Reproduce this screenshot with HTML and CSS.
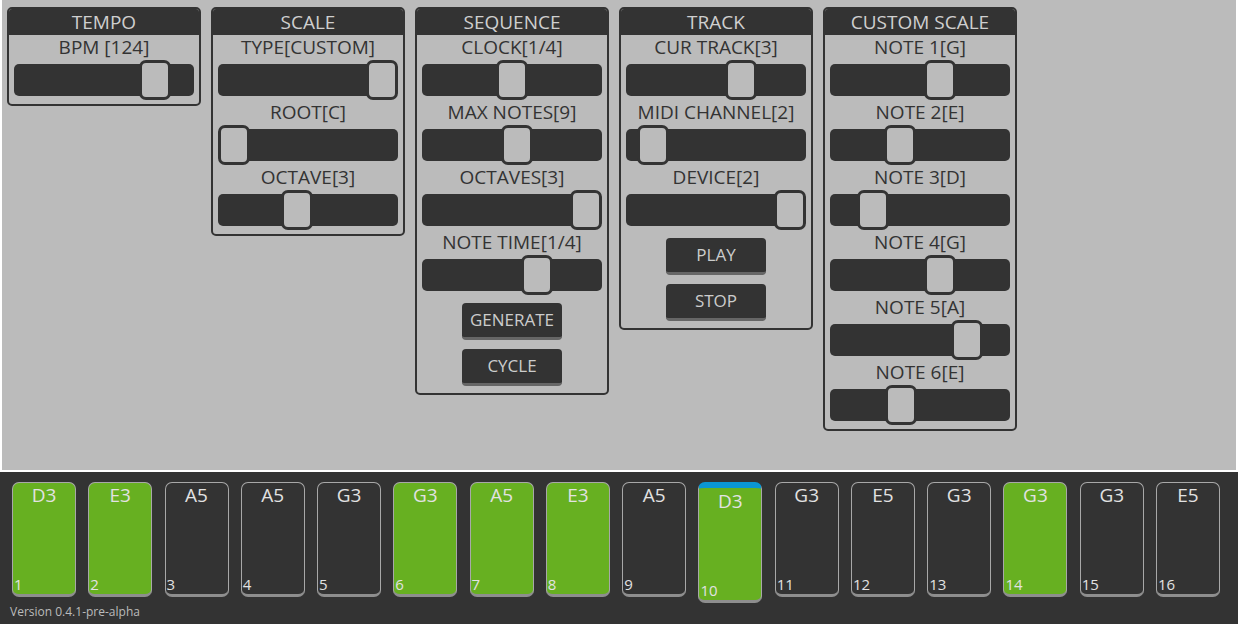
FILE: index.html
```html
<!DOCTYPE html>
<html>
<head>
<meta charset="utf-8">
<link rel="stylesheet" href="styles.css">
</head>
<body>
<div class="app">
  <div class="workspace">
    <div class="panel">
      <div class="panel-title">TEMPO</div>
      <div class="panel-body">
        <div class="row"><div class="label">BPM [124]</div><div class="slider"><div class="track"></div><div class="thumb" style="left:125px"></div></div></div>
      </div>
    </div>
    <div class="panel">
      <div class="panel-title">SCALE</div>
      <div class="panel-body">
        <div class="row"><div class="label">TYPE[CUSTOM]</div><div class="slider"><div class="track"></div><div class="thumb" style="left:148px"></div></div></div>
        <div class="row"><div class="label">ROOT[C]</div><div class="slider"><div class="track"></div><div class="thumb" style="left:0px"></div></div></div>
        <div class="row"><div class="label">OCTAVE[3]</div><div class="slider"><div class="track"></div><div class="thumb" style="left:63px"></div></div></div>
      </div>
    </div>
    <div class="panel">
      <div class="panel-title">SEQUENCE</div>
      <div class="panel-body">
        <div class="row"><div class="label">CLOCK[1/4]</div><div class="slider"><div class="track"></div><div class="thumb" style="left:74px"></div></div></div>
        <div class="row"><div class="label">MAX NOTES[9]</div><div class="slider"><div class="track"></div><div class="thumb" style="left:79px"></div></div></div>
        <div class="row"><div class="label">OCTAVES[3]</div><div class="slider"><div class="track"></div><div class="thumb" style="left:148px"></div></div></div>
        <div class="row"><div class="label">NOTE TIME[1/4]</div><div class="slider"><div class="track"></div><div class="thumb" style="left:99px"></div></div></div>
        <div class="buttons">
          <div class="btn">GENERATE</div>
          <div class="btn">CYCLE</div>
        </div>
      </div>
    </div>
    <div class="panel">
      <div class="panel-title">TRACK</div>
      <div class="panel-body">
        <div class="row"><div class="label">CUR TRACK[3]</div><div class="slider"><div class="track"></div><div class="thumb" style="left:99px"></div></div></div>
        <div class="row"><div class="label">MIDI CHANNEL[2]</div><div class="slider"><div class="track"></div><div class="thumb" style="left:11px"></div></div></div>
        <div class="row"><div class="label">DEVICE[2]</div><div class="slider"><div class="track"></div><div class="thumb" style="left:148px"></div></div></div>
        <div class="buttons">
          <div class="btn">PLAY</div>
          <div class="btn">STOP</div>
        </div>
      </div>
    </div>
    <div class="panel">
      <div class="panel-title">CUSTOM SCALE</div>
      <div class="panel-body">
        <div class="row"><div class="label">NOTE 1[G]</div><div class="slider"><div class="track"></div><div class="thumb" style="left:94px"></div></div></div>
        <div class="row"><div class="label">NOTE 2[E]</div><div class="slider"><div class="track"></div><div class="thumb" style="left:54px"></div></div></div>
        <div class="row"><div class="label">NOTE 3[D]</div><div class="slider"><div class="track"></div><div class="thumb" style="left:27px"></div></div></div>
        <div class="row"><div class="label">NOTE 4[G]</div><div class="slider"><div class="track"></div><div class="thumb" style="left:94px"></div></div></div>
        <div class="row"><div class="label">NOTE 5[A]</div><div class="slider"><div class="track"></div><div class="thumb" style="left:121px"></div></div></div>
        <div class="row"><div class="label">NOTE 6[E]</div><div class="slider"><div class="track"></div><div class="thumb" style="left:55px"></div></div></div>
      </div>
    </div>
  </div>
  <div class="steps">
    <div class="step-row">
      <div class="step on"><span class="note">D3</span><span class="num">1</span></div>
      <div class="step on"><span class="note">E3</span><span class="num">2</span></div>
      <div class="step"><span class="note">A5</span><span class="num">3</span></div>
      <div class="step"><span class="note">A5</span><span class="num">4</span></div>
      <div class="step"><span class="note">G3</span><span class="num">5</span></div>
      <div class="step on"><span class="note">G3</span><span class="num">6</span></div>
      <div class="step on"><span class="note">A5</span><span class="num">7</span></div>
      <div class="step on"><span class="note">E3</span><span class="num">8</span></div>
      <div class="step"><span class="note">A5</span><span class="num">9</span></div>
      <div class="step on current"><span class="note">D3</span><span class="num">10</span></div>
      <div class="step"><span class="note">G3</span><span class="num">11</span></div>
      <div class="step"><span class="note">E5</span><span class="num">12</span></div>
      <div class="step"><span class="note">G3</span><span class="num">13</span></div>
      <div class="step on"><span class="note">G3</span><span class="num">14</span></div>
      <div class="step"><span class="note">G3</span><span class="num">15</span></div>
      <div class="step"><span class="note">E5</span><span class="num">16</span></div>
    </div>
    <div class="version">Version 0.4.1-pre-alpha</div>
  </div>
</div>
</body>
</html>
```

FILE: styles.css
```css
* { box-sizing: border-box; }
html, body {
  margin: 0;
  padding: 0;
  background: #ffffff;
  font-family: "Open Sans", "DejaVu Sans", sans-serif;
}
.app {
  width: 1238px;
  height: 624px;
  display: flex;
  flex-direction: column;
  overflow: hidden;
}
.workspace {
  height: 470px;
  margin: 0 2px;
  background: #bbbbbb;
  padding: 7px 5px;
  display: flex;
  align-items: flex-start;
  gap: 10px;
}
.panel {
  width: 194px;
  border: 2px solid #333333;
  border-radius: 5px;
  overflow: hidden;
}
.panel-title {
  height: 26px;
  background: #333333;
  color: #cfcfcf;
  font-size: 19px;
  line-height: 26px;
  text-align: center;
}
.panel-body {
  padding: 0 5px 4px;
}
.row {
  display: flex;
  flex-direction: column;
}
.label {
  height: 25px;
  line-height: 25px;
  font-size: 19px;
  color: #333333;
  text-align: center;
  white-space: nowrap;
}
.slider {
  position: relative;
  height: 40px;
  padding: 4px 0;
}
.track {
  height: 32px;
  background: #333333;
  border-radius: 5px;
}
.thumb {
  position: absolute;
  top: 0;
  width: 32px;
  height: 40px;
  background: #bbbbbb;
  border: 3px solid #333333;
  border-radius: 7px;
}
.buttons {
  display: flex;
  flex-direction: column;
  align-items: center;
  gap: 9px;
  padding-top: 8px;
  padding-bottom: 3px;
}
.btn {
  width: 100px;
  height: 37px;
  background: #333333;
  border-radius: 4px;
  border-bottom: 3px solid #666666;
  color: #cccccc;
  font-size: 17px;
  line-height: 34px;
  text-align: center;
}
.steps {
  margin-top: 2px;
  flex: 1;
  background: #333333;
  padding: 10px 18px 0 12px;
  position: relative;
}
.step-row {
  display: flex;
  justify-content: space-between;
  align-items: flex-start;
}
.step {
  width: 64px;
  height: 115px;
  border: 1px solid #a8a8a8;
  border-bottom: 3px solid #8e8e8e;
  border-radius: 7px;
  background: #333333;
  display: flex;
  flex-direction: column;
  justify-content: space-between;
  color: #e2e2e2;
}
.step.on {
  background: #67b021;
}
.step.current {
  height: 121px;
  border-top: 6px solid #0a96d4;
}
.note {
  text-align: center;
  font-size: 19px;
  line-height: 22px;
  padding-top: 1px;
}
.step.current .note {
  padding-top: 2px;
}
.num {
  font-size: 15px;
  line-height: 17px;
  padding-left: 1px;
  padding-bottom: 1px;
}
.version {
  position: absolute;
  left: 10px;
  top: 131px;
  font-size: 12px;
  color: #bbbbbb;
}
```
